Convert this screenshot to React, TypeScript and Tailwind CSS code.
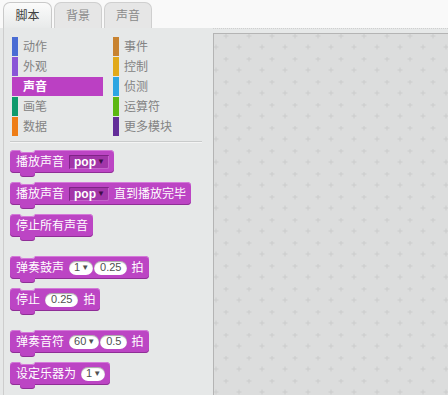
import React from "react";

const FONT = "font-['Liberation_Sans','Noto_Sans_CJK_SC',sans-serif]";

const left: [string, string][] = [
  ["动作", "#4a6cd4"],
  ["外观", "#8a55d7"],
  ["声音", "#bb42c3"],
  ["画笔", "#0e9a6c"],
  ["数据", "#ee7d16"],
];
const right: [string, string][] = [
  ["事件", "#c88330"],
  ["控制", "#e1a91a"],
  ["侦测", "#2ca5e2"],
  ["运算符", "#5cb712"],
  ["更多模块", "#632d99"],
];

function Cat({ name, color, selected }: { name: string; color: string; selected?: boolean }) {
  if (selected) {
    return (
      <div className="flex h-[19px] items-center bg-[#bb40c3]">
        <span className="ml-[11px] text-[12px] font-bold text-white">{name}</span>
      </div>
    );
  }
  return (
    <div className="flex h-[19px] items-center">
      <div className="h-full w-[6px]" style={{ backgroundColor: color }} />
      <span className="ml-[5px] text-[12px] text-[#838383]">{name}</span>
    </div>
  );
}

function Block({ children, className = "" }: { children: React.ReactNode; className?: string }) {
  return (
    <div
      className={`relative flex h-[23px] items-center gap-[5px] rounded-[4px] bg-[#bc45c4] pl-[6px] pr-[5px] text-[12px] text-white shadow-[inset_0_-1px_0_#8f2e96,inset_0_1px_0_#d47ad9] ${className}`}
    >
      <div className="absolute left-[10px] top-0 h-[3px] w-[15px] rounded-b-[3px] bg-[#e6e8e8] shadow-[inset_0_-1px_0_#d47ad9]" />
      {children}
      <div className="absolute bottom-[-3px] left-[10px] h-[4px] w-[15px] rounded-b-[3px] bg-[#bc45c4] shadow-[0_1px_0_#8f2e96]" />
    </div>
  );
}

function Drop({ text }: { text: string }) {
  return (
    <div className="flex h-[14px] w-[40px] items-center justify-between rounded-[1px] bg-[#a236a9] pl-[5px] pr-[4px] shadow-[inset_1px_1px_0_#7f2386,inset_-1px_-1px_0_#c462ca]">
      <span className="text-[12px] font-bold leading-none text-white">{text}</span>
      <span className="text-[8px] leading-none text-[#3f0d46]">▼</span>
    </div>
  );
}

function Pill({ text }: { text: string }) {
  return (
    <div className="flex h-[14px] items-center rounded-full bg-white px-[6px] shadow-[inset_0_1px_1px_rgba(0,0,0,0.35)]">
      <span className="text-[11px] leading-none text-[#505050]">{text}</span>
    </div>
  );
}

function PillDrop({ text }: { text: string }) {
  return (
    <div className="flex h-[14px] items-center gap-[1px] rounded-full bg-white pl-[5px] pr-[4px] shadow-[inset_0_1px_1px_rgba(0,0,0,0.35)]">
      <span className="text-[11px] leading-none text-[#505050]">{text}</span>
      <span className="text-[8px] leading-none text-[#505050]">▼</span>
    </div>
  );
}

export default function App() {
  return (
    <div className={`flex h-[395px] w-[448px] flex-col overflow-hidden bg-[#f9f9f9] ${FONT}`}>
      {/* tabs */}
      <div className="flex h-[28px] items-end gap-[2px] pl-[3px]">
        <div className="flex h-[26px] w-[49px] items-center justify-center rounded-t-[7px] border border-b-0 border-[#c9c9c9] bg-gradient-to-b from-[#fbfbfb] to-[#e8eaea] text-[12px] text-[#404040]">
          脚本
        </div>
        <div className="flex h-[26px] w-[48px] items-center justify-center rounded-t-[7px] border border-b-0 border-[#cfcfcf] bg-[#e6e6e6] text-[12px] text-[#8a8a8a]">
          背景
        </div>
        <div className="flex h-[26px] w-[48px] items-center justify-center rounded-t-[7px] border border-b-0 border-[#cfcfcf] bg-[#e6e6e6] text-[12px] text-[#8a8a8a]">
          声音
        </div>
      </div>

      {/* main */}
      <div className="flex flex-1 bg-[#e6e8e8]">
        {/* palette */}
        <div className="ml-[3px] flex w-[210px] flex-col border-l border-[#cdcdcd] pt-[9px]">
          <div className="ml-[8px] grid grid-cols-[91px_91px] gap-x-[10px] gap-y-[1px]">
            <div className="flex flex-col gap-[1px]">
              {left.map(([n, c]) => (
                <Cat key={n} name={n} color={c} selected={n === "声音"} />
              ))}
            </div>
            <div className="flex flex-col gap-[1px]">
              {right.map(([n, c]) => (
                <Cat key={n} name={n} color={c} />
              ))}
            </div>
          </div>
          <div className="ml-[6px] mt-[5px] h-px w-[192px] bg-[#c9cbcb] shadow-[0_1px_0_#f4f4f4]" />

          <div className="ml-[6px] mt-[8px] flex flex-col items-start">
            <Block>
              <span>播放声音</span>
              <Drop text="pop" />
            </Block>
            <Block className="mt-[9px]">
              <span>播放声音</span>
              <Drop text="pop" />
              <span>直到播放完毕</span>
            </Block>
            <Block className="mt-[9px]">
              <span>停止所有声音</span>
            </Block>
            <Block className="mt-[19px]">
              <span>弹奏鼓声</span>
              <div className="flex gap-[1px]">
                <PillDrop text="1" />
                <Pill text="0.25" />
              </div>
              <span className="ml-[-1px]">拍</span>
            </Block>
            <Block className="mt-[9px]">
              <span>停止</span>
              <Pill text="0.25" />
              <span>拍</span>
            </Block>
            <Block className="mt-[19px]">
              <span>弹奏音符</span>
              <div className="flex gap-[1px]">
                <PillDrop text="60" />
                <Pill text="0.5" />
              </div>
              <span className="ml-[-1px]">拍</span>
            </Block>
            <Block className="mt-[9px] pr-[4px]">
              <span>设定乐器为</span>
              <PillDrop text="1" />
            </Block>
          </div>
        </div>

        {/* script area */}
        <div className="flex flex-1 flex-col border-t border-dotted border-[#cfcfcf] pt-[4px]">
          <div className="relative flex-1 border-l border-t border-[#b4b4b4] bg-[#dcdddd]">
            <svg className="absolute inset-0 h-full w-full">
              <defs>
                <pattern id="grid" width="23" height="23" patternUnits="userSpaceOnUse">
                  <path d="M9.5 2h5M12 -0.5v5" stroke="#cbcccc" strokeWidth="1" />
                  <path d="M-0.5 13h5M2 10.5v5" stroke="#cbcccc" strokeWidth="1" />
                  <path d="M22.5 13h5" stroke="#cbcccc" strokeWidth="1" />
                </pattern>
              </defs>
              <rect width="100%" height="100%" fill="url(#grid)" />
            </svg>
          </div>
        </div>
      </div>
    </div>
  );
}
